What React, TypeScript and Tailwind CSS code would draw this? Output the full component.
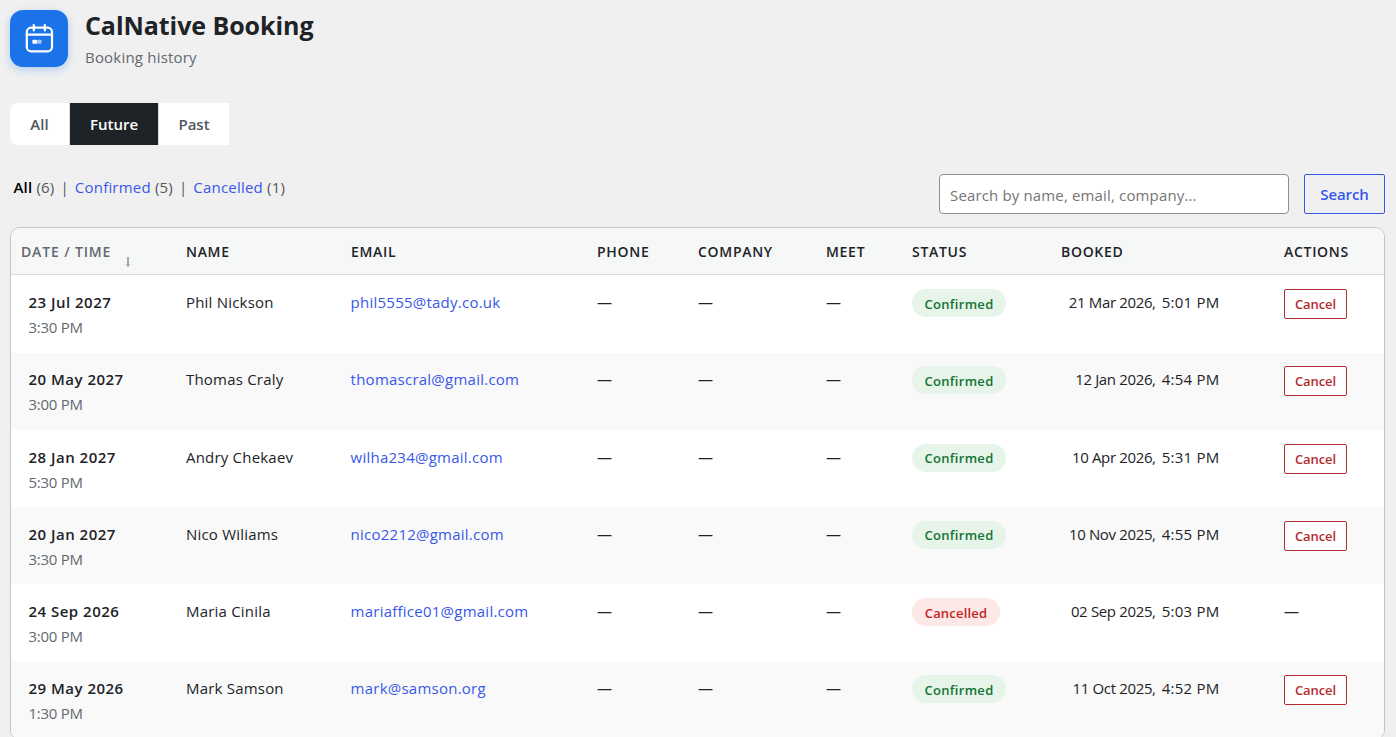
import clsx from "clsx";

type Status = "Confirmed" | "Cancelled";

interface Booking {
  date: string;
  time: string;
  name: string;
  email: string;
  status: Status;
  bookedDate: string;
  bookedTime: string;
}

const BOOKINGS: Booking[] = [
  { date: "23 Jul 2027", time: "3:30 PM", name: "Phil Nickson", email: "phil5555@tady.co.uk", status: "Confirmed", bookedDate: "21 Mar 2026,", bookedTime: "5:01 PM" },
  { date: "20 May 2027", time: "3:00 PM", name: "Thomas Craly", email: "thomascral@gmail.com", status: "Confirmed", bookedDate: "12 Jan 2026,", bookedTime: "4:54 PM" },
  { date: "28 Jan 2027", time: "5:30 PM", name: "Andry Chekaev", email: "wilha234@gmail.com", status: "Confirmed", bookedDate: "10 Apr 2026,", bookedTime: "5:31 PM" },
  { date: "20 Jan 2027", time: "3:30 PM", name: "Nico Wiliams", email: "nico2212@gmail.com", status: "Confirmed", bookedDate: "10 Nov 2025,", bookedTime: "4:55 PM" },
  { date: "24 Sep 2026", time: "3:00 PM", name: "Maria Cinila", email: "mariaffice01@gmail.com", status: "Cancelled", bookedDate: "02 Sep 2025,", bookedTime: "5:03 PM" },
  { date: "29 May 2026", time: "1:30 PM", name: "Mark Samson", email: "mark@samson.org", status: "Confirmed", bookedDate: "11 Oct 2025,", bookedTime: "4:52 PM" },
];

const COLUMNS = ["Name", "Email", "Phone", "Company", "Meet", "Status", "Booked", "Actions"];

function Logo() {
  return (
    <div className="flex h-[57px] w-[58px] shrink-0 items-center justify-center rounded-[13px] bg-[#1a73e8] shadow-[0_3px_9px_rgba(26,115,232,0.28)]">
      <svg width="30" height="30" viewBox="0 0 30 30" fill="none" stroke="#fff" strokeWidth="2.2" strokeLinecap="round">
        <rect x="2.8" y="3.7" width="25.2" height="23.6" rx="4.4" />
        <path d="M2.8 10.6h25.2M9.8 1.1v5.4M20.8 1.1v5.4" />
        <rect x="8.4" y="15.8" width="4.6" height="4" rx="0.8" fill="#fff" stroke="none" />
        <rect x="13.2" y="15.8" width="4.4" height="4" rx="0.8" fill="#fff" fillOpacity="0.6" stroke="none" />
      </svg>
    </div>
  );
}

function StatusBadge({ status }: { status: Status }) {
  return (
    <span
      className={clsx(
        "inline-flex h-[28px] items-center justify-center rounded-full pt-[2.6px] text-[13px] font-semibold",
        status === "Confirmed" ? "w-[94px] bg-[#e6f4ea] tracking-[0.3px] text-[#137333]" : "w-[88px] bg-[#fce8e6] tracking-[0.2px] text-[#c5221f]",
      )}
    >
      {status}
    </span>
  );
}

function BookingRow({ booking, striped }: { booking: Booking; striped: boolean }) {
  return (
    <tr className={clsx("h-[77.25px] align-top", striped ? "bg-[#f9f9f9]" : "bg-white")}>
      <td className="pt-[14.85px] pl-[17.4px] leading-6">
        <div className="font-semibold tracking-[0.5px]">{booking.date}</div>
        <div className="leading-[26px] tracking-[-0.25px] text-[#646970]">{booking.time}</div>
      </td>
      <td className="pt-[14.85px] pl-[10px] leading-6">{booking.name}</td>
      <td className="pt-[14.85px] pl-[9.6px] leading-6">
        <a href="#" className="tracking-[0.24px] text-[#3858e9]">{booking.email}</a>
      </td>
      <td className="pt-[14.85px] pl-[10px] leading-6">—</td>
      <td className="pt-[14.85px] pl-[10px] leading-6">—</td>
      <td className="pt-[14.85px] pl-[10px] leading-6">—</td>
      <td className="pt-[13.85px] pl-[10px]">
        <StatusBadge status={booking.status} />
      </td>
      <td className="pt-[14.85px] pr-[54.5px] leading-6">
        <div className="flex justify-end gap-[6px]">
          <span className="tracking-[-0.35px]">{booking.bookedDate}</span>
          <span className="tracking-[0.25px]">{booking.bookedTime}</span>
        </div>
      </td>
      {booking.status === "Cancelled" ? (
        <td className="pt-[14.85px] pl-[10px] leading-6">—</td>
      ) : (
        <td className="pt-[13.85px] pl-[10px]">
          <button className="flex h-[30px] w-[63px] items-center justify-center rounded-[2px] border border-[#b32d2e] bg-white pt-[1.4px] text-[13px] font-semibold tracking-[-0.1px] text-[#b32d2e]">
            Cancel
          </button>
        </td>
      )}
    </tr>
  );
}

export default function App() {
  return (
    <main className="h-screen overflow-hidden bg-[#f0f0f0] pt-[10px] pr-[11px] pl-[10px] font-['Open_Sans','Noto_Sans',sans-serif] text-[15px] tracking-[0.2px] text-[#1d2327]">
      <header className="flex h-[57px] gap-[17px]">
        <Logo />
        <div>
          <h1 className="-mt-px text-[25px] leading-8 font-bold tracking-[-0.06px]">CalNative Booking</h1>
          <p className="mt-1 leading-6 text-[#646970]">Booking history</p>
        </div>
      </header>

      {/* Time range tabs */}
      <nav className="mt-9 flex h-[42px] w-[219px] overflow-hidden rounded-l-[8px] bg-white font-semibold tracking-normal text-[#50575e]">
        <button className="w-[60px] border-r border-[#dcdcde]">All</button>
        <button className="w-[88px] bg-[#1d2327] text-white">Future</button>
        <button className="w-[71px] border-l border-[#dcdcde]">Past</button>
      </nav>

      {/* Status filters and search */}
      <div className="mt-[29px] flex h-10 justify-between">
        <div className="flex h-[27px] items-center pl-[3.4px] tracking-[0.2px] text-[#50575e]">
          <span><b className="font-semibold text-black">All</b> (6)</span>
          <span className="px-[6px]">|</span>
          <span><a href="#" className="text-[#3858e9]">Confirmed</a> (5)</span>
          <span className="px-[6px]">|</span>
          <span><a href="#" className="text-[#3858e9]">Cancelled</a> (1)</span>
        </div>
        <div className="flex gap-[15px]">
          <input
            placeholder="Search by name, email, company..."
            className="h-10 w-[350px] rounded-[4px] border border-[#8c8f94] bg-white px-[10px] pt-px tracking-[0.15px] placeholder:text-[#757575]"
          />
          <button className="h-10 w-[81px] rounded-[2px] border border-[#3858e9] font-semibold tracking-[-0.1px] text-[#3858e9]">Search</button>
        </div>
      </div>

      <div className="mt-[13px] overflow-hidden rounded-[10px] border border-[#c3c4c7] bg-white">
        <table className="w-[1373px] table-fixed border-separate border-spacing-0">
          <colgroup>
            <col className="w-[165px]" />
            <col className="w-[165px]" />
            <col className="w-[246px]" />
            <col className="w-[101px]" />
            <col className="w-[128px]" />
            <col className="w-[86px]" />
            <col className="w-[149px]" />
            <col className="w-[223px]" />
            <col className="w-[110px]" />
          </colgroup>
          <thead>
            <tr className="h-[47.3px] bg-[#f6f7f7] text-left text-sm tracking-[0.7px] uppercase">
              <th className="border-b border-[#dcdcde] pl-[10px] font-semibold text-[#646970]">
                <div className="flex items-center gap-[13px]">
                  <span className="w-[91px] pt-px tracking-[0.85px]">Date / Time</span>
                  <svg width="6" height="10" viewBox="0 0 6 10" className="mt-[21px]" fill="#a7aaad">
                    <path d="M2 0h2v7.5h1.5L3 10 .5 7.5H2z" />
                  </svg>
                </div>
              </th>
              {COLUMNS.map((column) => (
                <th key={column} className="border-b border-[#dcdcde] pt-[2px] pl-[10px] font-semibold">{column}</th>
              ))}
            </tr>
          </thead>
          <tbody>
            {BOOKINGS.map((booking, index) => (
              <BookingRow key={booking.email} booking={booking} striped={index % 2 === 1} />
            ))}
          </tbody>
        </table>
      </div>
    </main>
  );
}
